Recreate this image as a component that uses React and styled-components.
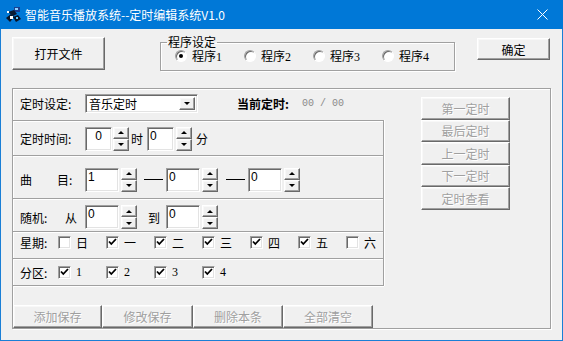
import React from 'react';
import styled, { createGlobalStyle, css } from 'styled-components';

const Global = createGlobalStyle`
  html, body { margin: 0; padding: 0; background: #f0f0f0; }
  body {
    font-family: "Liberation Serif", "Noto Sans CJK SC", serif;
    font-size: 12px;
    color: #000;
  }
  * { box-sizing: border-box; }
`;

const sunken = css`
  background: #fff;
  border: 1px solid;
  border-color: #a0a0a0 #fff #fff #a0a0a0;
  box-shadow: inset 1px 1px 0 #696969, inset -1px -1px 0 #e3e3e3;
`;

const raised = css`
  background: #f0f0f0;
  border: 1px solid;
  border-color: #fff #696969 #696969 #fff;
  box-shadow: inset -1px -1px 0 #a0a0a0, inset 1px 1px 0 #f8f8f8;
`;

const Window = styled.div`
  width: 563px;
  height: 341px;
  background: #f0f0f0;
  border: 1px solid #1a7fd6;
  border-top: none;
  display: flex;
  flex-direction: column;
`;

const TitleBar = styled.div`
  height: 29px;
  margin: 0 -1px;
  background: #0078d7;
  display: flex;
  align-items: center;
  padding-left: 5px;
  color: #fff;
`;

const TitleText = styled.span`
  margin-left: 3px;
  font-family: "Noto Sans CJK SC", "Liberation Sans", sans-serif;
  font-size: 12px;
  flex: 1;
`;

const CloseBox = styled.div`
  width: 30px;
  display: flex;
  justify-content: center;
  margin-right: 6px;
`;

const Content = styled.div`
  flex: 1;
  display: flex;
  flex-direction: column;
`;

const TopRow = styled.div`
  height: 59px;
  padding-left: 11px;
  display: flex;
  align-items: flex-start;
`;

const Button = styled.button`
  ${raised};
  padding: 0;
  font: inherit;
  font-family: "Noto Sans CJK SC", sans-serif;
  font-size: 12px;
  color: ${p => (p.disabled ? '#a0a0a0' : '#000')};
  text-shadow: ${p => (p.disabled ? '1px 1px 0 #fff' : 'none')};
  display: flex;
  align-items: center;
  justify-content: center;
  cursor: default;
`;

const OpenButton = styled(Button)`
  width: 93px;
  height: 33px;
  margin-top: 8px;
`;

const OkButton = styled(Button)`
  width: 73px;
  height: 22px;
  margin-top: 9px;
  margin-left: 22px;
`;

const SideButton = styled(Button)`
  width: 89px;
  height: 22.5px;
`;

const BottomButton = styled(Button)`
  width: ${p => p.$w}px;
  height: 23px;
`;

const Group = styled.fieldset`
  margin: 6px 0 0 55px;
  padding: 0 0 8px 0;
  width: 295px;
  border: 1px solid #a0a0a0;
  box-shadow: inset 1px 1px 0 #fff, 1px 1px 0 #fff;
  display: flex;
  min-inline-size: 0;
`;

const Legend = styled.legend`
  margin-left: 6px;
  padding: 0 1px;
  line-height: 14px;
  font-family: "Noto Sans CJK SC", sans-serif;
  font-size: 12px;
`;

const RadioRow = styled.div`
  display: flex;
  padding: 1px 0 0 14px;
`;

const RadioItem = styled.label`
  width: 69px;
  display: flex;
  align-items: center;
  height: 12px;
`;

const RadioDot = styled.span`
  width: 12px;
  height: 12px;
  border-radius: 50%;
  background: #fff;
  border: 1px solid;
  border-color: #a0a0a0 #fff #fff #a0a0a0;
  box-shadow: inset 1px 1px 0 #696969;
  display: flex;
  align-items: center;
  justify-content: center;
  margin-right: 5px;
  &::after {
    content: '';
    width: 4px;
    height: 4px;
    border-radius: 50%;
    background: ${p => (p.$on ? '#000' : 'transparent')};
  }
`;

const Frame = styled.div`
  margin-left: 11px;
  width: 539px;
  height: 241px;
  border: 1px solid #a0a0a0;
  box-shadow: inset 1px 1px 0 #fff, 1px 1px 0 #fff;
  display: flex;
`;

const LeftCol = styled.div`
  width: 371px;
  display: flex;
  flex-direction: column;
`;

const HeaderRow = styled.div`
  height: 31px;
  padding-left: 7px;
  padding-bottom: 2px;
  display: flex;
  align-items: center;
`;

const Label = styled.span`
  width: ${p => p.$w}px;
  flex: none;
  display: flex;
  font-family: "Noto Sans CJK SC", sans-serif;
  white-space: nowrap;
`;

const Gap = styled.span`
  width: ${p => p.$w}px;
  flex: none;
`;

const Combo = styled.div`
  ${sunken};
  width: 113px;
  height: 19px;
  display: flex;
  align-items: stretch;
  padding: 2px;
`;

const ComboText = styled.span`
  flex: 1;
  padding-left: 1px;
  line-height: 14px;
  font-family: "Noto Sans CJK SC", sans-serif;
`;

const ComboBtn = styled.span`
  ${raised};
  width: 16px;
  display: flex;
  align-items: center;
  justify-content: center;
`;

const Current = styled.span`
  margin-left: 39px;
  font-family: "Noto Sans CJK SC", sans-serif;
  font-weight: bold;
`;

const CurrentValue = styled.span`
  margin-left: 13px;
  font-family: "Liberation Mono", monospace;
  font-size: 10px;
  color: #8a8a8a;
  white-space: pre;
`;

const InnerBox = styled.div`
  border: 1px solid #a0a0a0;
  border-left: none;
  box-shadow: inset 0 1px 0 #fff, 0 1px 0 #fff, 1px 0 0 #fff;
  display: flex;
  flex-direction: column;
`;

const Row = styled.div`
  height: ${p => p.$h}px;
  padding: ${p => p.$pt || 0}px 0 ${p => p.$pb || 0}px 7px;
  display: flex;
  align-items: center;
  border-bottom: ${p => (p.$last ? 'none' : '1px solid #a0a0a0')};
  box-shadow: ${p => (p.$last ? 'none' : '0 1px 0 #fff')};
  font-family: "Noto Sans CJK SC", sans-serif;
`;

const Field = styled.div`
  ${sunken};
  width: ${p => p.$w}px;
  height: 24px;
  margin-left: ${p => p.$ml || 0}px;
  padding: 2px 2px 0;
  text-align: ${p => (p.$center ? 'center' : 'left')};
  line-height: 13px;
  font-family: "Liberation Sans", sans-serif;
  font-size: 12px;
`;

const Spin = styled.div`
  width: 16px;
  height: 24px;
  margin-left: ${p => p.$ml ?? 1}px;
  display: flex;
  flex-direction: column;
`;

const SpinBtn = styled.div`
  ${raised};
  flex: 1;
  display: flex;
  align-items: center;
  justify-content: center;
`;

const Tri = styled.span`
  width: 0;
  height: 0;
  border-left: ${p => p.$s || 3}px solid transparent;
  border-right: ${p => p.$s || 3}px solid transparent;
  ${p => (p.$down ? `border-top: ${p.$s || 3}px solid #000;` : `border-bottom: ${p.$s || 3}px solid #000;`)}
`;

const Word = styled.span`
  margin-left: ${p => p.$ml || 0}px;
  flex: none;
`;

const Dash = styled.span`
  width: 19px;
  height: 1px;
  background: #000;
  margin-left: ${p => p.$ml}px;
  margin-right: ${p => p.$mr}px;
  flex: none;
`;

const CheckItem = styled.span`
  width: 48px;
  display: flex;
  align-items: center;
  flex: none;
`;

const Box = styled.span`
  ${sunken};
  width: 13px;
  height: 13px;
  display: flex;
  align-items: center;
  justify-content: center;
  margin-right: 5px;
`;

const CheckLabel = styled.span`
  font-family: ${p => (p.$num ? '"Liberation Serif", serif' : '"Noto Sans CJK SC", sans-serif')};
`;

const BottomArea = styled.div`
  flex: 1;
  display: flex;
  align-items: flex-end;
`;

const RightCol = styled.div`
  flex: 1;
  padding: 8px 0 0 37px;
  display: flex;
  flex-direction: column;
`;

function SpinEdit({ w, value, center, ml, spinMl }) {
  return (
    <>
      <Field $w={w} $center={center} $ml={ml}>{value}</Field>
      <Spin $ml={spinMl}>
        <SpinBtn><Tri /></SpinBtn>
        <SpinBtn><Tri $down /></SpinBtn>
      </Spin>
    </>
  );
}

function Check({ on, label, num }) {
  return (
    <CheckItem>
      <Box>
        {on && (
          <svg width="9" height="8" viewBox="0 0 9 8">
            <path d="M1 3.5 L3.3 6 L8 1" fill="none" stroke="#000" strokeWidth="1.8" />
          </svg>
        )}
      </Box>
      <CheckLabel $num={num}>{label}</CheckLabel>
    </CheckItem>
  );
}

function AppIcon() {
  return (
    <svg width="17" height="17" viewBox="0 0 17 17">
      <rect x="9" y="1" width="6" height="5" fill="#1b3f8f" />
      <rect x="10" y="2" width="3" height="2" fill="#8fd0ff" />
      <path d="M3 6 L9 4 L12 8 L8 10 Z" fill="#0b1a33" />
      <path d="M1 12 L6 8 L9 11 L5 16 Z" fill="#0a1426" />
      <path d="M8 11 L13 9 L16 13 L11 16 Z" fill="#0a1426" />
      <rect x="5" y="10" width="3" height="3" fill="#fff" />
      <rect x="11" y="11" width="2" height="2" fill="#5ec6ff" />
      <rect x="2" y="5" width="2" height="2" fill="#fff" />
    </svg>
  );
}

export default function App() {
  const days = [
    ['日', false], ['一', true], ['二', true], ['三', true],
    ['四', true], ['五', true], ['六', false],
  ];
  return (
    <>
      <Global />
      <Window>
        <TitleBar>
          <AppIcon />
          <TitleText>智能音乐播放系统--定时编辑系统V1.0</TitleText>
          <CloseBox>
            <svg width="11" height="11" viewBox="0 0 11 11">
              <path d="M0.5 0.5 L10.5 10.5 M10.5 0.5 L0.5 10.5" stroke="#fff" strokeWidth="1" />
            </svg>
          </CloseBox>
        </TitleBar>
        <Content>
          <TopRow>
            <OpenButton>打开文件</OpenButton>
            <Group>
              <Legend>程序设定</Legend>
              <RadioRow>
                {['程序1', '程序2', '程序3', '程序4'].map((t, i) => (
                  <RadioItem key={t}>
                    <RadioDot $on={i === 0} />
                    <span>{t}</span>
                  </RadioItem>
                ))}
              </RadioRow>
            </Group>
            <OkButton>确定</OkButton>
          </TopRow>
          <Frame>
            <LeftCol>
              <HeaderRow>
                <Label $w={65}>定时设定:</Label>
                <Combo>
                  <ComboText>音乐定时</ComboText>
                  <ComboBtn><Tri $down $s={3.5} /></ComboBtn>
                </Combo>
                <Current>当前定时:</Current>
                <CurrentValue>00 / 00</CurrentValue>
              </HeaderRow>
              <InnerBox>
                <Row $h={35} $pt={1}>
                  <Label $w={65}>定时时间:</Label>
                  <SpinEdit w={27} value="0" center />
                  <Word $ml={2}>时</Word>
                  <SpinEdit w={27} value="0" ml={4} spinMl={2} />
                  <Word $ml={4}>分</Word>
                </Row>
                <Row $h={43} $pt={5}>
                  <Label $w={65}>曲<Gap $w={25} />目:</Label>
                  <SpinEdit w={34} value="1" spinMl={2} />
                  <Dash $ml={7} $mr={3} />
                  <SpinEdit w={34} value="0" spinMl={2} />
                  <Dash $ml={8} $mr={3} />
                  <SpinEdit w={34} value="0" spinMl={2} />
                </Row>
                <Row $h={33} $pt={4}>
                  <Label $w={45}>随机:</Label>
                  <Label $w={20}>从</Label>
                  <SpinEdit w={34} value="0" spinMl={2} />
                  <Word $ml={11}>到</Word>
                  <SpinEdit w={34} value="0" ml={6} spinMl={2} />
                </Row>
                <Row $h={27} $pb={6}>
                  <Label $w={38}>星期:</Label>
                  {days.map(([d, on]) => (
                    <Check key={d} on={on} label={d} />
                  ))}
                </Row>
                <Row $h={26} $last>
                  <Label $w={38}>分区:</Label>
                  {['1', '2', '3', '4'].map(n => (
                    <Check key={n} on label={n} num />
                  ))}
                </Row>
              </InnerBox>
              <BottomArea>
                <BottomButton $w={89} disabled>添加保存</BottomButton>
                <BottomButton $w={91} disabled>修改保存</BottomButton>
                <BottomButton $w={90} disabled>删除本条</BottomButton>
                <BottomButton $w={90} disabled>全部清空</BottomButton>
              </BottomArea>
            </LeftCol>
            <RightCol>
              {['第一定时', '最后定时', '上一定时', '下一定时', '定时查看'].map(t => (
                <SideButton key={t} disabled>{t}</SideButton>
              ))}
            </RightCol>
          </Frame>
        </Content>
      </Window>
    </>
  );
}
